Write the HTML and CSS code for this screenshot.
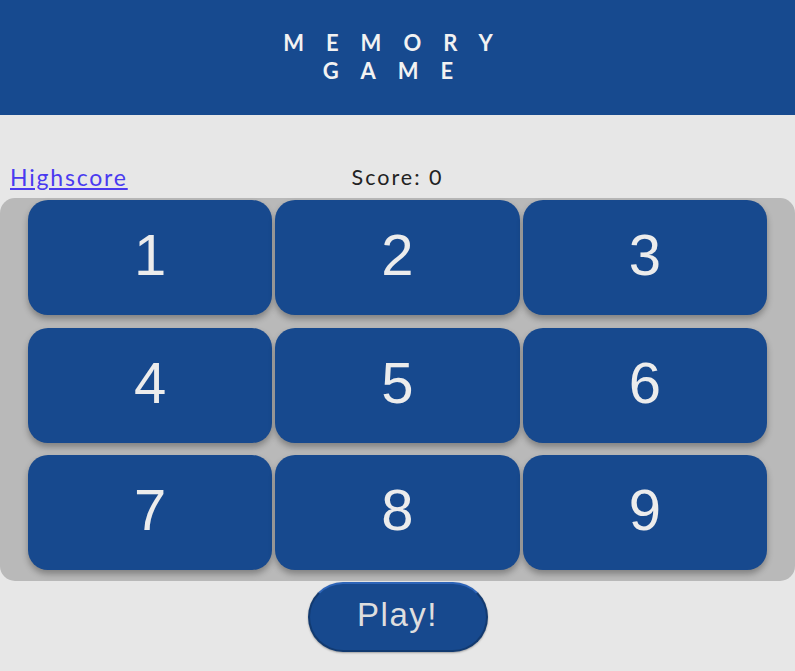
FILE: index.html
```html
<!DOCTYPE html>
<html>
<head>
<meta charset="utf-8">
<link rel="stylesheet" href="styles.css">
</head>
<body>
<header class="header">
  <h1 class="title">MEMORY GAME</h1>
</header>
<div class="info">
  <a class="highscore" href="#">Highscore</a>
  <span class="score">Score: 0</span>
  <span class="spacer"></span>
</div>
<div class="board">
  <div class="card">1</div>
  <div class="card">2</div>
  <div class="card">3</div>
  <div class="card">4</div>
  <div class="card">5</div>
  <div class="card">6</div>
  <div class="card">7</div>
  <div class="card">8</div>
  <div class="card">9</div>
</div>
<div class="actions">
  <button class="play">Play!</button>
</div>
</body>
</html>
```
FILE: styles.css
```css
html, body {
  margin: 0;
  padding: 0;
}
body {
  background: #e7e7e7;
  font-family: Lato, "Liberation Sans", sans-serif;
  width: 795px;
  height: 671px;
  overflow: hidden;
}
.header {
  background: #174a8f;
  height: 115px;
  display: flex;
  justify-content: center;
  align-items: flex-start;
  box-sizing: border-box;
  padding-top: 29px;
}
.title {
  margin: 0;
  width: 300px;
  text-align: center;
  color: #f2f2f2;
  font-family: Lato, sans-serif;
  font-weight: 700;
  font-size: 22px;
  line-height: 28px;
  letter-spacing: 22px;
  padding-left: 3px;
}
.info {
  height: 83px;
  display: flex;
  align-items: flex-end;
  padding: 0 10px 8px;
  box-sizing: border-box;
}
.highscore {
  flex: 1;
  color: #4a3af0;
  font-size: 23px;
  letter-spacing: 1.8px;
  line-height: 26px;
}
.score {
  font-size: 21.5px;
  letter-spacing: 2px;
  color: #222;
  line-height: 26px;
}
.spacer {
  flex: 1;
}
.board {
  background: #b9b9b9;
  border-radius: 15px;
  padding: 2px 28px 10px;
  display: grid;
  grid-template-columns: repeat(3, 1fr);
  column-gap: 3px;
  row-gap: 12px;
  height: 383px;
  box-sizing: border-box;
}
.card {
  background: #17498e;
  border-radius: 20px;
  height: 115px;
  display: flex;
  align-items: center;
  justify-content: center;
  color: #ececec;
  font-family: "Liberation Sans", Arial, sans-serif;
  font-size: 58px;
  padding-bottom: 6px;
  box-sizing: border-box;
  box-shadow: 0 4px 6px rgba(0, 0, 0, 0.3);
}
.actions {
  display: flex;
  justify-content: center;
  padding-top: 1px;
}
.play {
  width: 180px;
  height: 70px;
  border-radius: 35px;
  background: #17498e;
  border: 2px solid #123a70;
  border-top-color: #2d64b8;
  color: #dedede;
  font-family: "Liberation Sans", Arial, sans-serif;
  font-size: 33px;
  letter-spacing: 1.5px;
  padding: 0 0 4px;
  box-shadow: 0 1px 2px rgba(0, 0, 0, 0.3);
}
```
